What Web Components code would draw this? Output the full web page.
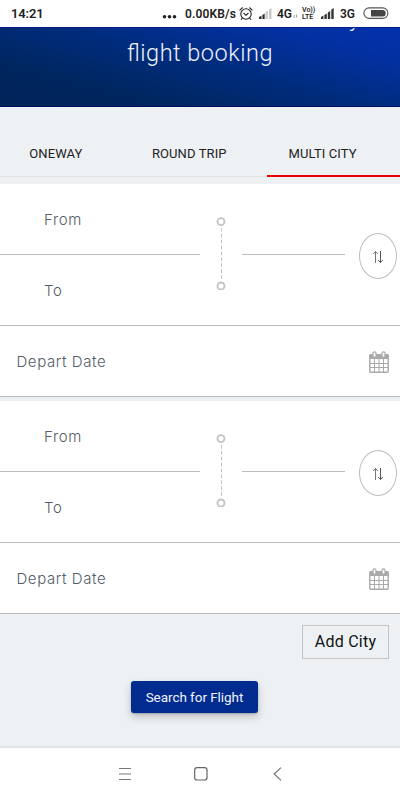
<!DOCTYPE html>
<html lang="en">
<head>
<meta charset="utf-8">
<title>Flight booking</title>
<style>
html, body { margin: 0; height: 100%; }
body { overflow: hidden; font-family: Roboto, "Liberation Sans", sans-serif; background: #edf1f4; }
</style>
</head>
<body>
<flight-app></flight-app>
<script>
function define(name, html) {
  const template = document.createElement('template');
  template.innerHTML = html;
  customElements.define(name, class extends HTMLElement {
    constructor() {
      super();
      this.attachShadow({ mode: 'open' }).append(template.content.cloneNode(true));
    }
  });
}

define('status-bar', `
<style>
:host { display: flex; align-items: center; box-sizing: border-box; height: 27px; padding: 1px 11px 0 11px; background: #fff; color: #222; font-size: 12px; font-weight: 600; line-height: 26px; white-space: nowrap; }
.time { font-size: 13px; width: 151px; letter-spacing: -.15px; }
.speed { width: 54px; margin-left: 8px; letter-spacing: .13px; }
svg { display: block; flex: none; }
.net { width: 16px; margin-left: 5px; }
.lte { display: grid; grid-template-rows: 7px 7px; font-size: 7px; line-height: 7px; width: 14px; margin-left: 4px; }
.three { margin-left: 5px; width: 17px; }
</style>
<span class="time">14:21</span>
<svg width="15" height="26"><g fill="#222"><circle cx="2.5" cy="15.8" r="1.8"/><circle cx="7.5" cy="15.8" r="1.8"/><circle cx="12.5" cy="15.8" r="1.8"/></g></svg>
<span class="speed">0.00KB/s</span>
<svg width="14" height="26" fill="none" stroke="#222" stroke-width="1.1"><circle cx="7" cy="13" r="5.2"/><path d="M.6 9.3 3.6 6.5M10.4 6.5l3 2.8M4.6 12 7 14.3 9.5 12M3.3 17 2 18.8M10.7 17l1.3 1.8"/></svg>
<svg width="13" height="26" style="margin-left:6px"><path fill="#333" d="M0 18v-2l2.500-1.500V18zM3.400 18v-4l2.300-1.500V18z"/><path fill="#c8c8c8" d="M6.600 18v-7l2.300-1.500V18zM10 18V8.500l2.500-1.500V18z"/></svg>
<span class="net">4G</span>
<svg width="5" height="26" fill="none" stroke="#999" stroke-width=".9"><path d="M1.200 14v3M3.500 13.500v3"/></svg>
<span class="lte"><span>Vo))</span><span>LTE</span></span>
<svg width="14" height="26" style="margin-left:5px"><path fill="#333" d="M0 18v-2l2.400-1.500V18zM3.400 18v-4l2.400-1.500V18zM6.800 18v-6.500L9.200 10v8zM10.300 18V8.500L12.700 7v11z"/></svg>
<span class="three">3G</span>
<svg width="26" height="26" style="margin-left:auto"><rect x=".9" y="6.900" width="24" height="10.500" rx="5.250" fill="none" stroke="#555" stroke-width="1.100"/><path fill="#444" d="M8 9h11.500a3.200 3.200 0 0 1 0 6.400H8z"/></svg>
`);

define('page-hero', `
<style>
:host { display: block; position: relative; overflow: hidden; box-sizing: border-box; height: 80px; border-top: 1px solid #00208a; border-bottom: 1px solid #000b62; background: linear-gradient(14deg, #00255a 0%, #00265f 24%, #002c7c 52%, #0330a0 80%, #0432ad 100%); }
h1 { margin: 0; padding-top: 10px; font: 300 23.500px/30px Roboto, sans-serif; letter-spacing: .5px; text-align: center; color: #eef1ff; font-feature-settings: "liga" 1; }
.line { position: absolute; top: -25px; left: 349px; font: 300 23.500px/30px Roboto, sans-serif; color: #eef1ff; }
</style>
<span class="line">y</span>
<h1>flight booking</h1>
`);

define('trip-tabs', `
<style>
:host { display: grid; grid-template-columns: 1fr 1fr 1fr; box-sizing: border-box; height: 77px; padding: 24px 0 7px; background: #edf1f4; }
</style><slot></slot>`);

define('trip-tab', `
<style>
:host { display: block; box-sizing: border-box; height: 46px; text-align: center; font-size: 13px; line-height: 46px; color: #222; box-shadow: inset 0 -1px #e6e3e3; padding-right: 21.500px; letter-spacing: .1px; white-space: nowrap; }
:host([selected]) { box-shadow: inset 0 -2px #e60000; }
</style><slot></slot>`);

define('calendar-icon', `
<style>:host { display: block; width: 20px; height: 22px; margin-top: 2px; }</style>
<svg width="20" height="22" fill="none" stroke="#a9a9a9"><rect x=".8" y="3.800" width="18.400" height="17.400" rx="1" stroke-width="1.400"/><path fill="#a9a9a9" stroke="none" d="M.5 3.500h19V8H.5z"/><rect x="4" y=".8" width="3" height="5.500" rx="1.500" fill="#fff" stroke-width="1.200"/><rect x="13" y=".8" width="3" height="5.500" rx="1.500" fill="#fff" stroke-width="1.200"/><path d="M5.500 8v13M10 8v13M14.500 8v13M1 12.500h18M1 16.500h18"/></svg>`);

define('swap-button', `
<style>
:host { display: grid; place-items: center; box-sizing: border-box; width: 38px; height: 46px; border: 1px solid #bdbdbd; border-radius: 50%; background: #fff; }
svg { display: block; margin-top: 3px; }
</style>
<svg width="12" height="14" fill="none" stroke="#555"><path stroke="#777" d="M3.500 13V1.500M1.200 4l2.300-2.500L5.800 4"/><path d="M8.500 1v11.500M6.200 10l2.300 2.500 2.300-2.500"/></svg>`);

define('route-marker', `
<style>
:host { display: block; width: 10px; height: 74px; }
</style>
<svg width="10" height="74" fill="none" stroke="#c4c4c4"><circle cx="5" cy="5.600" r="3.500" stroke-width="1.900"/><circle cx="5" cy="70" r="3.500" stroke-width="1.900"/><path d="M5.500 11.800v53" stroke-dasharray="4 1.900"/></svg>`);

define('flight-segment', `
<style>
:host { display: block; background: #fff; color: #535d66; font: 300 15px/20px Inter, "Open Sans", sans-serif; letter-spacing: .65px; }
.route { display: grid; grid-template-columns: 200px 42px 103px 55px; grid-template-rows: 70px 1px 70px 1px; height: 142px; box-sizing: border-box; }
.place { grid-column: 1; padding-left: 44px; line-height: 71px; }
.to { grid-row: 3; line-height: 71px; }
.rule { background: #bcbcbc; grid-row: 2; }
.r2 { grid-column: 3; }
.end { grid-row: 4; grid-column: 1 / -1; }
route-marker { grid-column: 2; grid-row: 1 / 4; justify-self: center; align-self: center; margin-bottom: 3px; }
swap-button { grid-column: 4; grid-row: 1 / 4; align-self: center; margin: 2px 0 0 14px; }
.date { display: flex; box-sizing: border-box; height: 71px; align-items: center; justify-content: space-between; padding: 0 11px 0 16.500px; border-bottom: 1px solid #bcbcbc; }
.date span { padding-top: 1px; letter-spacing: .58px; }
</style>
<div class="route">
<div class="place">From</div>
<div class="place to">To</div>
<div class="rule"></div><div class="rule r2"></div>
<route-marker></route-marker>
<swap-button></swap-button>
<div class="rule end"></div>
</div>
<div class="date"><span>Depart Date</span><calendar-icon></calendar-icon></div>
`);

define('add-city', `
<style>
:host { display: block; box-sizing: border-box; width: 87px; height: 34px; border: 1px solid #c5c5c5; text-align: center; font-size: 16px; letter-spacing: .25px; line-height: 32px; color: #111; white-space: nowrap; }
</style><slot></slot>`);

define('search-button', `
<style>
:host { display: block; width: 127px; height: 32px; border-radius: 3px; background: #022b90; color: #f0f3ff; text-align: center; font-size: 13.500px; letter-spacing: -.05px; line-height: 32px; box-shadow: 0 1px 2px #0003, 0 4px 9px #0003; white-space: nowrap; }
</style><slot></slot>`);

define('nav-bar', `
<style>
:host { display: grid; grid-template-columns: 76px 79px 9px; box-sizing: border-box; height: 54px; border-top: 2px solid #dfe2e4; background: #fff; align-items: center; padding: 0 118px; }
svg { display: block; }
</style>
<svg width="14" height="14" fill="none" stroke="#777"><path d="M1 1.500h12M1 7h12M1 12.500h12"/></svg>
<svg width="14" height="14" fill="none" stroke="#666" stroke-width="1.200"><rect x=".7" y=".7" width="12.300" height="12.300" rx="2.300"/></svg>
<svg width="9" height="14" fill="none" stroke="#777" stroke-width="1.200"><path d="M8 .6 1.200 7 8 13.400"/></svg>
`);

define('flight-app', `
<style>
:host { display: flex; flex-direction: column; width: 400px; height: 800px; background: #edf1f4; }
.segments { display: flex; flex-direction: column; gap: 4px; }
.actions { flex: 1; display: flex; flex-direction: column; }
add-city { align-self: flex-end; margin: 11px 11px 0 0; }
search-button { align-self: center; margin: 22px 0 0 -11px; }
</style>
<status-bar></status-bar>
<page-hero></page-hero>
<trip-tabs><trip-tab>ONEWAY</trip-tab><trip-tab>ROUND TRIP</trip-tab><trip-tab selected>MULTI CITY</trip-tab></trip-tabs>
<div class="segments"><flight-segment></flight-segment><flight-segment></flight-segment></div>
<div class="actions"><add-city>Add City</add-city><search-button>Search for Flight</search-button></div>
<nav-bar></nav-bar>
`);
</script>
</body>
</html>
